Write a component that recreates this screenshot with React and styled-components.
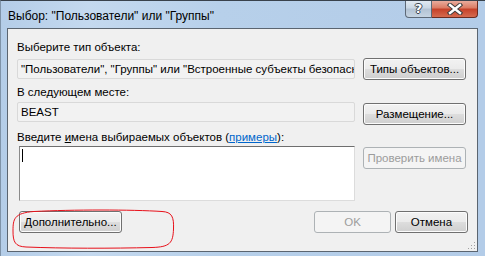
import styled, { createGlobalStyle } from 'styled-components'

const Global = createGlobalStyle`
  html, body { margin: 0; padding: 0; overflow: hidden; }
  body { font-family: "Liberation Sans", Arial, sans-serif; font-size: 11.5px; color: #000; }
`

export default function App() {
    return (
        <>
            <Global />
            <Window>
                <TitleBar>
                    <Title>Выбор: "Пользователи" или "Группы"</Title>
                    <Caption>
                        <HelpBtn>?</HelpBtn>
                        <CloseBtn>
                            <svg width="18" height="12" viewBox="0 0 18 12">
                                <path d="M4 2 L14 10 M14 2 L4 10" stroke="#3d3d3d" strokeWidth="4.4" strokeLinecap="square" fill="none" />
                                <path d="M4 2 L14 10 M14 2 L4 10" stroke="#ffffff" strokeWidth="2.4" strokeLinecap="square" fill="none" />
                            </svg>
                        </CloseBtn>
                    </Caption>
                </TitleBar>

                <Client>
                    <Label>Выберите тип объекта:</Label>
                    <Row $top={3}>
                        <ReadField $offset={1}><FieldText>"Пользователи", "Группы" или "Встроенные субъекты безопасно</FieldText></ReadField>
                        <Button>Типы объектов...</Button>
                    </Row>

                    <Label $top={5}>В следующем месте:</Label>
                    <Row $top={2}>
                        <ReadField><FieldText>BEAST</FieldText></ReadField>
                        <Button $offset={1}>Размещение...</Button>
                    </Row>

                    <Label $top={5}>Введите <u>и</u>мена выбираемых объектов (<LinkText>примеры</LinkText>):</Label>
                    <Row $top={1}>
                        <NamesBox>
                            <Caret />
                        </NamesBox>
                        <Button $offset={1} disabled>Проверить имена</Button>
                    </Row>

                    <Footer>
                        <Button $width={103}>Дополнительно...</Button>
                        <Spacer />
                        <Button $width={77} disabled>OK</Button>
                        <Button $width={73}>Отмена</Button>
                    </Footer>

                    <Grip>
                        <svg width="8" height="8" viewBox="0 0 8 8">
                            <rect x="6" y="0" width="1" height="1" fill="#a0a0a0" />
                            <rect x="3" y="3" width="1" height="1" fill="#a0a0a0" />
                            <rect x="6" y="3" width="1" height="1" fill="#a0a0a0" />
                            <rect x="0" y="6" width="1" height="1" fill="#a0a0a0" />
                            <rect x="3" y="6" width="1" height="1" fill="#a0a0a0" />
                            <rect x="6" y="6" width="1" height="1" fill="#a0a0a0" />
                        </svg>
                    </Grip>
                </Client>

                <Marker width="164" height="41" viewBox="0 0 164 41">
                    <path d="M22 2.5 C60 0.5 120 0.5 150 2.5 C160 3 162 8 161.5 20 C161 34 158 38 140 38.5 C100 39.5 50 39.5 14 38 C3 37.5 1 33 1 22 C1 10 2 4 22 2.5 Z"
                        fill="none" stroke="#e8101a" strokeWidth="1" />
                </Marker>
            </Window>
        </>
    )
}

const Window = styled.div`
    position: relative;
    width: 485px;
    height: 256px;
    box-sizing: border-box;
    display: flex;
    flex-direction: column;
    border-top: 1px solid #39424c;
    border-left: 1px solid #7f93a8;
    background: linear-gradient(to right, #b4cde8 0%, #c4d9ef 18%, #b7d0ea 45%, #b3cce8 100%);
    overflow: hidden;
`

const TitleBar = styled.div`
    height: 27px;
    display: flex;
    align-items: flex-start;
    flex-shrink: 0;
`

const Title = styled.div`
    padding: 8px 0 0 7px;
    line-height: 15px;
    font-size: 12px;
    color: #000;
`

const Caption = styled.div`
    margin: -1px 7px 0 auto;
    display: flex;
`

const HelpBtn = styled.div`
    width: 27px;
    height: 18px;
    box-sizing: border-box;
    border: 1px solid #5d6977;
    border-top: none;
    border-radius: 0 0 0 4px;
    background: linear-gradient(to bottom, #e4ecf4 0%, #cbd8e5 45%, #b3c3d4 55%, #c6d4e2 100%);
    color: #fff;
    font: bold 13px "DejaVu Sans", sans-serif;
    line-height: 17px;
    text-align: center;
    text-shadow: 1px 0 0 #3a4450, -1px 0 0 #3a4450, 0 1px 0 #3a4450, 0 -1px 0 #3a4450;
`

const CloseBtn = styled.div`
    width: 46px;
    height: 18px;
    box-sizing: border-box;
    border: 1px solid #6b2b20;
    border-top: none;
    border-left: none;
    border-radius: 0 0 4px 0;
    background: linear-gradient(to bottom, #ebb3a5 0%, #dc7d66 45%, #c6422a 55%, #d56b4f 100%);
    display: flex;
    align-items: center;
    justify-content: center;
`

const Client = styled.div`
    position: relative;
    flex: 1;
    margin: 0 7px 4px 6px;
    border: 1px solid #5b6570;
    background: #f0f0f0;
    padding: 11px 9px 0 9px;
    display: flex;
    flex-direction: column;
`

const Label = styled.div`
    line-height: 15px;
    margin-top: ${p => p.$top || 0}px;
    white-space: nowrap;
`

const LinkText = styled.span`
    color: #0066cc;
    text-decoration: underline;
`

const Row = styled.div`
    display: flex;
    align-items: flex-start;
    gap: 8px;
    margin-top: ${p => p.$top || 0}px;
`

const ReadField = styled.div`
    width: 338px;
    height: 20px;
    box-sizing: border-box;
    margin-top: ${p => p.$offset || 0}px;
    border: 1px solid #d9d9d9;
    border-radius: 2px;
    background: #f2f2f2;
    padding: 0 0 0 3px;
    line-height: 18px;
    overflow: hidden;
`

const FieldText = styled.div`
    width: 100%;
    white-space: nowrap;
    overflow: hidden;
`

const NamesBox = styled.div`
    width: 336px;
    height: 55px;
    margin-left: 2px;
    box-sizing: border-box;
    border: 1px solid #dcdcdc;
    border-top-color: #6e6e6e;
    border-left-color: #8a8a8a;
    background: #fff;
    padding: 2px 2px;
`

const Caret = styled.div`
    width: 1px;
    height: 13px;
    background: #000;
`

const Button = styled.button`
    width: ${p => p.$width || 103}px;
    height: 22px;
    margin-top: ${p => p.$offset || 0}px;
    padding: 0;
    box-sizing: border-box;
    border: 1px solid #707070;
    border-radius: 3px;
    background: linear-gradient(to bottom, #f2f2f2 0%, #ebebeb 48%, #dddddd 52%, #cfcfcf 100%);
    box-shadow: inset 0 0 0 1px #fcfcfc;
    font-family: "Liberation Sans", Arial, sans-serif;
    font-size: 11.5px;
    color: #000;
    flex-shrink: 0;

    &:disabled {
        border-color: #adb2b5;
        background: #f4f4f4;
        box-shadow: none;
        color: #9c9c9c;
    }
`

const Footer = styled.div`
    display: flex;
    gap: 4px;
    margin-top: 10px;
    padding-left: 2px;
`

const Spacer = styled.div`
    flex: 1;
`

const Grip = styled.div`
    position: absolute;
    right: 1px;
    bottom: 1px;
    display: flex;
`

const Marker = styled.svg`
    position: absolute;
    left: 11px;
    top: 208px;
`
